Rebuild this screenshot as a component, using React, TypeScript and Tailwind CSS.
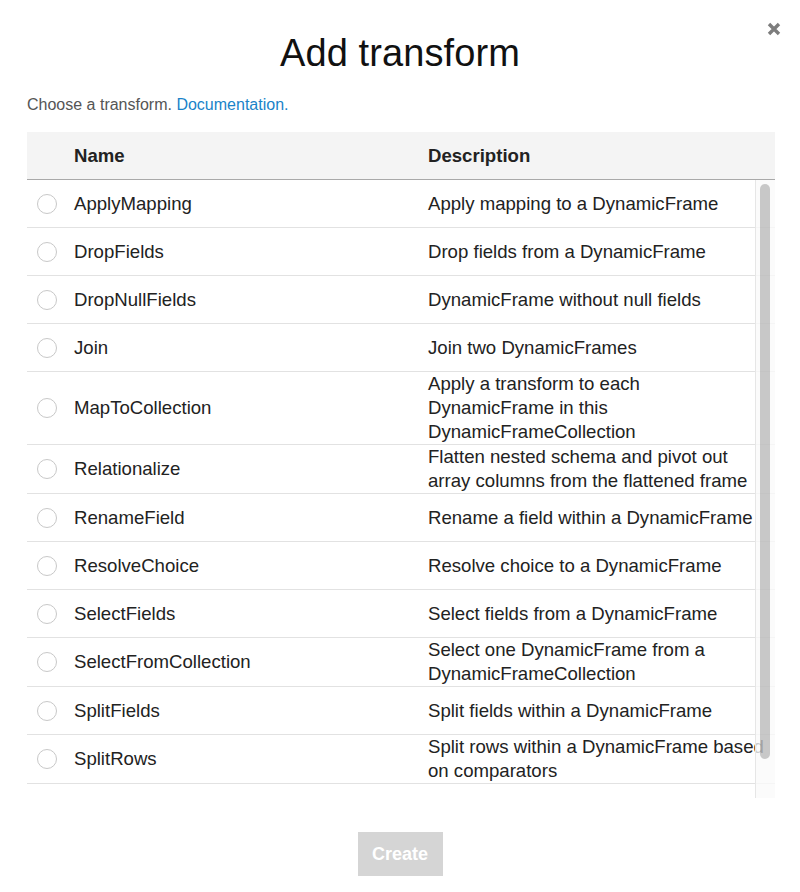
import React from "react";

type Row = { name: string; desc: string[] };

const rows: Row[] = [
  { name: "ApplyMapping", desc: ["Apply mapping to a DynamicFrame"] },
  { name: "DropFields", desc: ["Drop fields from a DynamicFrame"] },
  { name: "DropNullFields", desc: ["DynamicFrame without null fields"] },
  { name: "Join", desc: ["Join two DynamicFrames"] },
  {
    name: "MapToCollection",
    desc: ["Apply a transform to each", "DynamicFrame in this", "DynamicFrameCollection"],
  },
  {
    name: "Relationalize",
    desc: ["Flatten nested schema and pivot out", "array columns from the flattened frame"],
  },
  { name: "RenameField", desc: ["Rename a field within a DynamicFrame"] },
  { name: "ResolveChoice", desc: ["Resolve choice to a DynamicFrame"] },
  { name: "SelectFields", desc: ["Select fields from a DynamicFrame"] },
  {
    name: "SelectFromCollection",
    desc: ["Select one DynamicFrame from a", "DynamicFrameCollection"],
  },
  { name: "SplitFields", desc: ["Split fields within a DynamicFrame"] },
  {
    name: "SplitRows",
    desc: ["Split rows within a DynamicFrame based", "on comparators"],
  },
];

export default function App() {
  return (
    <div
      className="relative w-[800px] h-[892px] bg-white overflow-hidden text-[#222]"
      style={{ fontFamily: '"Liberation Sans", Arial, Helvetica, sans-serif' }}
    >
      {/* close */}
      <button className="absolute top-[22px] right-[19px] w-[14px] h-[14px]">
        <svg width="14" height="14" viewBox="0 0 14 14">
          <path d="M2 2 L12 12 M12 2 L2 12" stroke="#7d7d7d" strokeWidth="3.4" strokeLinecap="butt" />
        </svg>
      </button>

      <div className="pt-[31px] flex flex-col">
        <h1 className="text-center text-[38px] leading-[44px] font-normal text-[#111] tracking-[0.1px]">
          Add transform
        </h1>

        <p className="mt-[20px] ml-[27px] text-[16px] leading-[20px] text-[#555]">
          Choose a transform. <span className="text-[#1a83c9]">Documentation.</span>
        </p>

        <div className="mt-[17px] ml-[27px] w-[748px]">
          {/* header */}
          <div className="flex items-center h-[48px] bg-[#f4f4f4] border-b border-[#a9a9a9] text-[18.6px] font-bold">
            <div className="w-[47px]" />
            <div className="w-[354px]">Name</div>
            <div className="flex-1">Description</div>
          </div>

          {/* body */}
          <div className="relative h-[618px] overflow-hidden">
            {rows.map((r) => (
              <div
                key={r.name}
                className="flex items-center min-h-[48px] border-b border-[#e2e2e2] text-[18.6px] leading-[24px]"
              >
                <div className="w-[47px] pl-[10px] flex items-center">
                  <span className="block w-[20px] h-[20px] rounded-full border border-[#c8c8c8] bg-white" />
                </div>
                <div className="w-[354px] whitespace-nowrap">{r.name}</div>
                <div className="flex-1 whitespace-nowrap">
                  {r.desc.map((d, i) => (
                    <div key={i}>{d}</div>
                  ))}
                </div>
              </div>
            ))}

            {/* overlay scrollbar */}
            <div className="absolute top-0 right-0 bottom-0 w-[20px] border-l border-[#e6e6e6] bg-[rgba(250,250,250,0.78)]">
              <div className="absolute left-[4px] top-[4px] w-[10px] h-[575px] rounded-full bg-[rgba(0,0,0,0.2)]" />
            </div>
          </div>
        </div>

        <div className="mt-[34px] flex justify-center">
          <button className="w-[85px] h-[44px] bg-[#d5d5d5] text-white text-[18px] font-bold">
            Create
          </button>
        </div>
      </div>
    </div>
  );
}
